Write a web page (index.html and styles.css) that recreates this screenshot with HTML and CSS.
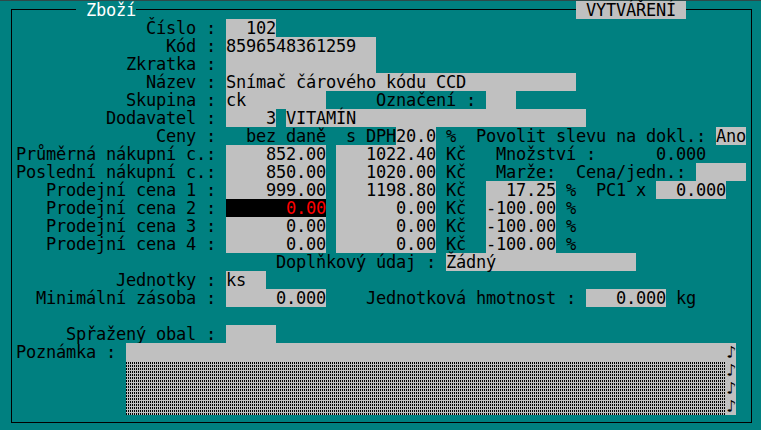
FILE: index.html
```html
<!DOCTYPE html>
<html lang="cs">
<head>
<meta charset="utf-8">
<title>Zboží</title>
<link rel="stylesheet" href="styles.css">
</head>
<body>
<div class="topline"></div>
<div class="frame">
<div class="title">&nbsp;Zboží</div>
<div class="mode">&nbsp;VYTVÁŘENÍ&nbsp;</div>
<div class="rows">
<div class="row">             Číslo : <span class="f">  102</span></div>
<div class="row">               Kód : <span class="f">8596548361259  </span></div>
<div class="row">           Zkratka : <span class="f">               </span></div>
<div class="row">             Název : <span class="f">Snímač čárového kódu CCD           </span></div>
<div class="row">           Skupina : <span class="f">ck        </span>     Označení : <span class="f">   </span></div>
<div class="row">         Dodavatel : <span class="f">    3</span> <span class="f">VITAMÍN                       </span></div>
<div class="row">              Ceny :   bez daně  s DPH<span class="f">20.0</span> %  Povolit slevu na dokl.: <span class="f">Ano</span></div>
<div class="row">Průměrná nákupní c.: <span class="f">    852.00</span> <span class="f">   1022.40</span> Kč   Množství :      0.000</div>
<div class="row">Poslední nákupní c.: <span class="f">    850.00</span> <span class="f">   1020.00</span> Kč   Marže:  Cena/jedn.: <span class="f">     </span></div>
<div class="row">   Prodejní cena 1 : <span class="f">    999.00</span> <span class="f">   1198.80</span> Kč  <span class="f">  17.25</span> %  PC1 x <span class="f">  0.000</span></div>
<div class="row">   Prodejní cena 2 : <span class="b">      0.00</span> <span class="f">      0.00</span> Kč  <span class="f">-100.00</span> %</div>
<div class="row">   Prodejní cena 3 : <span class="f">      0.00</span> <span class="f">      0.00</span> Kč  <span class="f">-100.00</span> %</div>
<div class="row">   Prodejní cena 4 : <span class="f">      0.00</span> <span class="f">      0.00</span> Kč  <span class="f">-100.00</span> %</div>
<div class="row">                          Doplňkový údaj : <span class="f">Žádný              </span></div>
<div class="row">          Jednotky : <span class="f">ks  </span></div>
<div class="row">  Minimální zásoba : <span class="f">     0.000</span>    Jednotková hmotnost : <span class="f">   0.000</span> kg</div>
<div class="row"> </div>
<div class="row">     Spřažený obal : <span class="f">     </span></div>
<div class="row">Poznámka : <span class="f">                                                            </span><span class="note">♪</span></div>
<div class="row">           <span class="shade">                                                            </span><span class="note">♪</span></div>
<div class="row">           <span class="shade">                                                            </span><span class="note">♪</span></div>
<div class="row">           <span class="shade">                                                            </span><span class="note">♪</span></div>
</div>
</div>
</body>
</html>
```
FILE: styles.css
```css
html, body {
  margin: 0;
  padding: 0;
  background: #008080;
}
body {
  width: 761px;
  height: 430px;
  overflow: hidden;
  font-family: "DejaVu Sans Mono", monospace;
  font-size: 17px;
  letter-spacing: -0.2349px;
  color: #000;
}
.topline {
  height: 1px;
  background: #2e4a4a;
}
.frame {
  position: relative;
  box-sizing: border-box;
  width: 741px;
  margin: 8px 0 0 11px;
  border: 1px solid #000;
  padding: 9px 0 7px 4px;
}
.title, .mode {
  position: absolute;
  top: -9px;
  box-sizing: border-box;
  height: 18px;
  padding-top: 1px;
  line-height: 17px;
  white-space: pre;
}
.title {
  left: 64px;
  color: #fff;
  background: #008080;
}
.mode {
  left: 564px;
  background: #c0c0c0;
}
.row {
  box-sizing: border-box;
  height: 18px;
  padding-top: 1px;
  line-height: 17px;
  white-space: pre;
}
.f, .b, .shade, .note {
  display: inline-block;
  box-sizing: border-box;
  height: 18px;
  margin-top: -1px;
  padding-top: 1px;
  vertical-align: top;
}
.f {
  background: #c0c0c0;
}
.b {
  background: #000;
  color: #ff0000;
}
.note {
  width: 10px;
  background: #c0c0c0;
  text-align: center;
  letter-spacing: 0;
}
.shade {
  background-color: #c0c0c0;
  background-image:
    linear-gradient(#c0c0c0 1px, transparent 1px),
    linear-gradient(90deg, #000 1px, #c0c0c0 1px);
  background-size: 2px 3px, 2px 3px;
}
```
